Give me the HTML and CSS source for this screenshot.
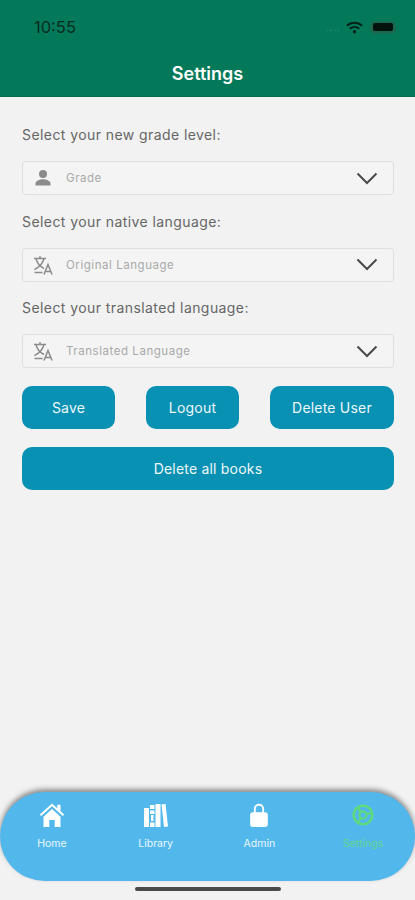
FILE: index.html
```html
<!DOCTYPE html>
<html lang="en">
<head>
    <meta charset="UTF-8">
    <meta name="viewport" content="width=device-width, initial-scale=1.0">
    <title>Settings</title>
    <link rel="stylesheet" href="styles.css">
</head>
<body>
    <div class="app">
        <header class="top-bar">
            <div class="status-bar">
                <span class="clock">10:55</span>
                <div class="status-icons">
                    <span class="signal">....</span>
                    <svg class="wifi" viewBox="0 0 18 13" width="17" height="13">
                        <path d="M1 4.600C5.600.4 12.400.4 17 4.600" fill="none" stroke="#06231a" stroke-width="2"/>
                        <path d="M4 7.800c2.900-2.500 7.100-2.500 10 0" fill="none" stroke="#06231a" stroke-width="2"/>
                        <circle cx="9" cy="11" r="1.800" fill="#06231a"/>
                    </svg>
                    <span class="battery"><span class="battery-fill"></span></span>
                </div>
            </div>
            <h1 class="page-title">Settings</h1>
        </header>

        <main class="settings">
            <label class="field-label">Select your new grade level:</label>
            <div class="select-box">
                <svg class="field-icon" viewBox="0 0 24 24" width="24" height="24">
                    <circle cx="12" cy="8" r="4" fill="#8b8b8b"/>
                    <path d="M4.500 19.500v-2c0-2.800 5-4.200 7.500-4.200s7.500 1.400 7.500 4.200v2z" fill="#8b8b8b"/>
                </svg>
                <span class="placeholder">Grade</span>
                <svg class="chevron" viewBox="0 0 22 13" width="22" height="13"><path d="M1.500 1.500 11 11l9.500-9.500" fill="none" stroke="#4a4a4a" stroke-width="2"/></svg>
            </div>

            <label class="field-label">Select your native language:</label>
            <div class="select-box">
                <svg class="field-icon" viewBox="0 0 24 24" width="24" height="24">
                    <path d="M3 5.500h12M9 3v2.500M5 5.500c1 4.500 4 8 8 10M13 5.500c-1 4.500-4.500 8.500-9.500 11M3.500 19.500h8" fill="none" stroke="#8b8b8b" stroke-width="1.400"/>
                    <path d="M13 21.500 17 11.500l4 10M14.500 18.500h5" fill="none" stroke="#8b8b8b" stroke-width="1.500"/>
                </svg>
                <span class="placeholder">Original Language</span>
                <svg class="chevron" viewBox="0 0 22 13" width="22" height="13"><path d="M1.500 1.500 11 11l9.500-9.500" fill="none" stroke="#4a4a4a" stroke-width="2"/></svg>
            </div>

            <label class="field-label">Select your translated language:</label>
            <div class="select-box">
                <svg class="field-icon" viewBox="0 0 24 24" width="24" height="24">
                    <path d="M3 5.500h12M9 3v2.500M5 5.500c1 4.500 4 8 8 10M13 5.500c-1 4.500-4.500 8.500-9.500 11M3.500 19.500h8" fill="none" stroke="#8b8b8b" stroke-width="1.400"/>
                    <path d="M13 21.500 17 11.500l4 10M14.500 18.500h5" fill="none" stroke="#8b8b8b" stroke-width="1.500"/>
                </svg>
                <span class="placeholder">Translated Language</span>
                <svg class="chevron" viewBox="0 0 22 13" width="22" height="13"><path d="M1.500 1.500 11 11l9.500-9.500" fill="none" stroke="#4a4a4a" stroke-width="2"/></svg>
            </div>

            <div class="button-row">
                <button class="action-btn small">Save</button>
                <button class="action-btn small">Logout</button>
                <button class="action-btn wide">Delete User</button>
            </div>
            <button class="action-btn full">Delete all books</button>
        </main>

        <nav class="tab-bar">
            <div class="tab">
                <svg class="tab-icon" viewBox="0 0 26 26" width="26" height="26">
                    <path d="M13 1.500 0.800 12.500l1.400 1.500L13 4.300 23.800 14l1.400-1.500L21.500 9.200V2.800h-3.200v3.500z" fill="#fff"/>
                    <path d="M4.500 14.800 13 7l8.500 7.800V25h-5.800v-7h-5.400v7H4.500z" fill="#fff"/>
                </svg>
                <span>Home</span>
            </div>
            <div class="tab">
                <svg class="tab-icon" viewBox="0 0 28 26" width="28" height="26">
                    <path d="M2 6h5v19H2zM8 3h4.500v4H8zM8 8.500h4.500V12H8zM8 20.500h4.500V25H8zM13.500 2h5v23h-5z" fill="#fff"/>
                    <path d="M9 13h2.500v6H9z" fill="#fff"/>
                    <path d="M19.500 2.500 23.500 2 26 24.500l-4 .6z" fill="#fff"/>
                </svg>
                <span>Library</span>
            </div>
            <div class="tab">
                <svg class="tab-icon" viewBox="0 0 24 28" width="24" height="28">
                    <path d="M7.500 13V7.500a4.500 4.500 0 0 1 9 0V13" fill="none" stroke="#fff" stroke-width="2"/>
                    <rect x="2.500" y="11" width="19" height="16" rx="3" fill="#fff"/>
                </svg>
                <span>Admin</span>
            </div>
            <div class="tab active">
                <svg class="tab-icon" viewBox="0 0 24 24" width="24" height="24">
                    <circle cx="12" cy="12" r="9.300" fill="none" stroke="#5fd97f" stroke-width="2.600"/>
                    <circle cx="12" cy="12" r="3.600" fill="none" stroke="#5fd97f" stroke-width="2.200"/>
                    <path d="M7 4.500 9.500 9.500M20.500 10.500h-5M9.800 15 7 19.500" fill="none" stroke="#5fd97f" stroke-width="2.200"/>
                </svg>
                <span>Settings</span>
            </div>
        </nav>
        <div class="home-indicator"></div>
    </div>
</body>
</html>
```

FILE: styles.css
```css
* {
    box-sizing: border-box;
}

body {
    margin: 0;
    background-color: #f2f2f2;
    font-family: Inter, "Liberation Sans", sans-serif;
}

.app {
    display: flex;
    flex-direction: column;
    height: 900px;
    overflow: hidden;
}

.top-bar {
    height: 97px;
    padding: 0 34px 0;
    background-color: #04795a;
    border-bottom: 1px solid #046d51;
}

.status-bar {
    display: flex;
    justify-content: space-between;
    align-items: center;
    height: 22px;
    margin-top: 16px;
}

.clock {
    font-size: 16.500px;
    color: #062c20;
}

.status-icons {
    display: flex;
    align-items: center;
    gap: 5px;
    margin-right: -15px;
}

.signal {
    font-size: 10px;
    letter-spacing: 1px;
    color: #2f8f72;
}

.wifi {
    margin-right: 2px;
}

.battery {
    display: flex;
    align-items: center;
    justify-content: center;
    width: 26px;
    height: 13px;
    border-radius: 5px;
    background-color: #1b6a50;
}

.battery-fill {
    width: 20px;
    height: 8px;
    border-radius: 2px;
    background-color: #04120d;
}

.page-title {
    margin: 24px 0 0;
    font-size: 18px;
    line-height: 24px;
    font-weight: 600;
    text-align: center;
    color: #fff;
}

.settings {
    display: flex;
    flex-direction: column;
    padding: 29px 21px 0 22px;
}

.field-label {
    height: 18.500px;
    margin-bottom: 16.500px;
    font-size: 14px;
    line-height: 18px;
    letter-spacing: 0.42px;
    color: #666;
}

.select-box {
    display: flex;
    align-items: center;
    height: 34px;
    margin-bottom: 17.500px;
    padding: 0 15px 0 8px;
    background-color: #f4f4f4;
    border: 1px solid #dedede;
    border-radius: 4px;
}

.field-icon {
    flex-shrink: 0;
}

.placeholder {
    margin-left: 11px;
    font-size: 11.500px;
    letter-spacing: 0.55px;
    color: #a9a9a9;
}

.chevron {
    margin-left: auto;
}

.button-row {
    display: flex;
    justify-content: space-between;
    margin-bottom: 18px;
    margin-top: 0.500px;
}

.action-btn {
    height: 43px;
    padding: 0;
    border: none;
    border-radius: 10px;
    background-color: #0891b2;
    color: #eef8fb;
    font-family: inherit;
    font-size: 14px;
    letter-spacing: 0.2px;
}

.action-btn.small {
    width: 93px;
}

.action-btn.wide {
    width: 124px;
}

.action-btn.full {
    width: 100%;
}

.tab-bar {
    display: flex;
    justify-content: space-between;
    height: 89px;
    margin-top: auto;
    padding: 10px 0 0;
    background-color: #52b8ec;
    border-radius: 45px;
    box-shadow: 0 -3px 5px rgba(60, 60, 60, 0.55);
}

.tab {
    display: flex;
    flex-direction: column;
    align-items: center;
    width: 104px;
    font-size: 10.500px;
    color: #eaf6fd;
}

.tab-icon {
    height: 26px;
    margin-bottom: 9px;
}

.tab.active {
    color: #66d58f;
}

.home-indicator {
    flex-shrink: 0;
    width: 146px;
    height: 4px;
    margin: 6px auto 9px;
    border-radius: 2px;
    background-color: #4a4a4a;
}
```
